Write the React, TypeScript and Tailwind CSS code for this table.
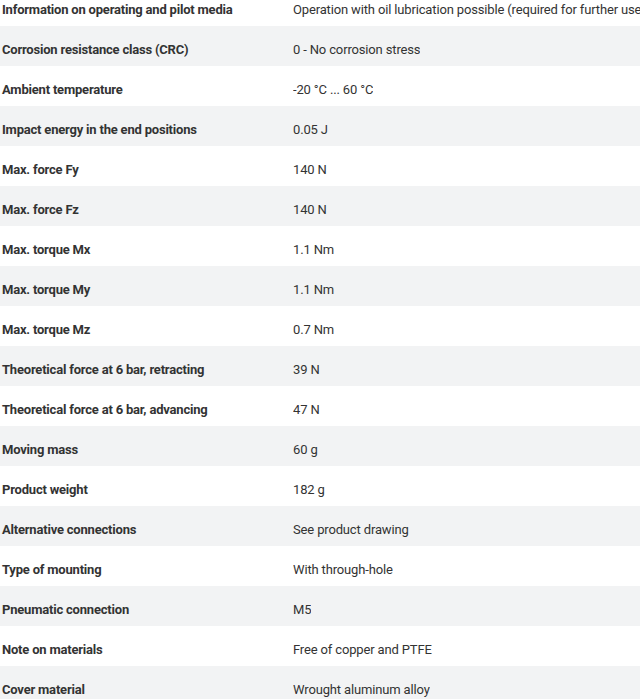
const rows: [string, string][] = [
  ['Information on operating and pilot media', 'Operation with oil lubrication possible (required for further use)'],
  ['Corrosion resistance class (CRC)', '0 - No corrosion stress'],
  ['Ambient temperature', '-20 °C ... 60 °C'],
  ['Impact energy in the end positions', '0.05 J'],
  ['Max. force Fy', '140 N'],
  ['Max. force Fz', '140 N'],
  ['Max. torque Mx', '1.1 Nm'],
  ['Max. torque My', '1.1 Nm'],
  ['Max. torque Mz', '0.7 Nm'],
  ['Theoretical force at 6 bar, retracting', '39 N'],
  ['Theoretical force at 6 bar, advancing', '47 N'],
  ['Moving mass', '60 g'],
  ['Product weight', '182 g'],
  ['Alternative connections', 'See product drawing'],
  ['Type of mounting', 'With through-hole'],
  ['Pneumatic connection', 'M5'],
  ['Note on materials', 'Free of copper and PTFE'],
  ['Cover material', 'Wrought aluminum alloy'],
];

export default function App() {
  return (
    <div className="w-[640px] h-[699px] overflow-hidden bg-white">
      {/* page is scrolled, first row cut at the top */}
      <div className="-mt-[14px] font-['Roboto',sans-serif] text-[13px] text-[#333]">
        {rows.map(([label, value], i) => (
          <div
            key={label}
            className={'flex h-10 items-center pt-2 whitespace-nowrap ' + (i % 2 === 1 ? 'bg-[#f2f3f4]' : 'bg-white')}
          >
            <div className="w-[293px] shrink-0 pl-[2px] font-bold tracking-[-0.2px]">{label}</div>
            <div className="overflow-hidden tracking-[-0.15px]">{value}</div>
          </div>
        ))}
      </div>
    </div>
  );
}
